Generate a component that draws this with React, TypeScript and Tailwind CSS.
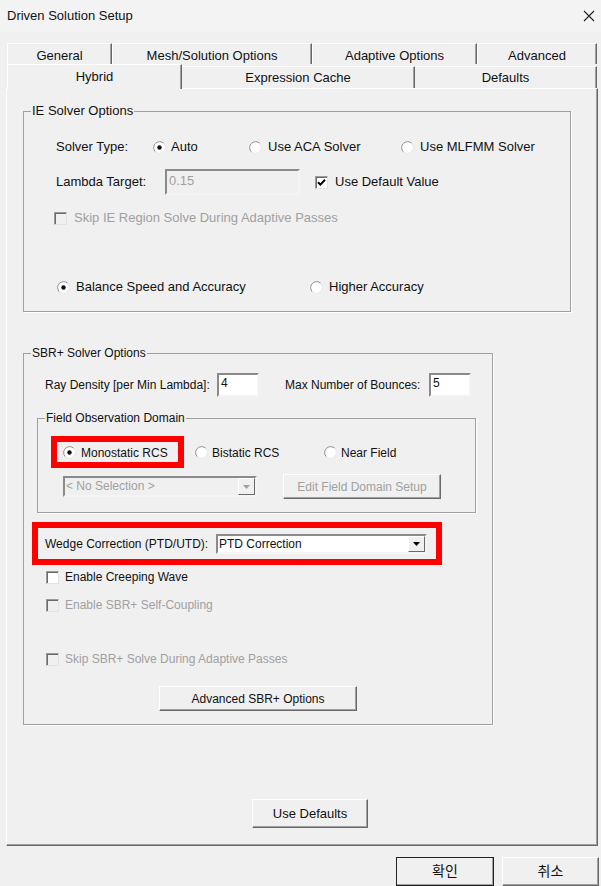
import React from "react";

const sans = "font-['Liberation_Sans','Noto_Sans_CJK_KR',sans-serif]";

function Radio({ on }: { on?: boolean }) {
  return (
    <svg width="13" height="13" viewBox="0 0 13 13" className="shrink-0">
      <circle cx="6.5" cy="6.5" r="6" fill="#fff" />
      <path d="M2.26 10.74 A6 6 0 0 1 10.74 2.26" fill="none" stroke="#8c8c8c" />
      <path d="M10.74 2.26 A6 6 0 0 1 2.26 10.74" fill="none" stroke="#e6e6e6" />
      {on && <circle cx="6.5" cy="6.5" r="2.2" fill="#111" />}
    </svg>
  );
}

function Check({ on, off }: { on?: boolean; off?: boolean }) {
  return (
    <span
      className={`w-[13px] h-[13px] shrink-0 flex items-center justify-center border border-t-[#9a9a9a] border-l-[#9a9a9a] border-r-[#e3e3e3] border-b-[#e3e3e3] shadow-[inset_1px_1px_0_#6a6a6a] ${
        off ? "bg-[#f0f0f0]" : "bg-white"
      }`}
    >
      {on && (
        <svg width="9" height="9" viewBox="0 0 9 9">
          <path d="M1 4.2 L3.4 6.6 L8 1.8" fill="none" stroke="#000" strokeWidth="2" />
        </svg>
      )}
    </span>
  );
}

function Btn({ children, off, className = "" }: { children: React.ReactNode; off?: boolean; className?: string }) {
  return (
    <div
      className={`flex items-center justify-center shrink-0 bg-[#f0f0f0] border border-t-white border-l-white border-r-[#696969] border-b-[#696969] shadow-[inset_-1px_-1px_0_#a0a0a0] ${
        off ? "text-[#a0a0a0]" : "text-[#111]"
      } ${className}`}
    >
      {children}
    </div>
  );
}

function Combo({ text, off, className = "" }: { text: string; off?: boolean; className?: string }) {
  return (
    <div
      className={`flex items-stretch shrink-0 border-2 border-t-[#8a8a8a] border-l-[#8a8a8a] border-r-[#f4f4f4] border-b-[#f4f4f4] ${
        off ? "bg-[#f0f0f0] text-[#a0a0a0]" : "bg-white text-[#111]"
      } ${className}`}
    >
      <span className="grow pl-[1px] leading-[16px]">{text}</span>
      <span className="w-[17px] bg-[#f0f0f0] border border-t-white border-l-white border-r-[#696969] border-b-[#696969] flex items-center justify-center">
        <svg width="7" height="4" viewBox="0 0 7 4">
          <path d="M0 0 H7 L3.5 4 Z" fill={off ? "#a0a0a0" : "#000"} />
        </svg>
      </span>
    </div>
  );
}

function Field({ value, off, className = "" }: { value: string; off?: boolean; className?: string }) {
  return (
    <div
      className={`shrink-0 border-2 border-t-[#8a8a8a] border-l-[#8a8a8a] border-r-[#f4f4f4] border-b-[#f4f4f4] pl-[2px] ${
        off ? "bg-[#f0f0f0] text-[#a0a0a0]" : "bg-white text-[#111]"
      } ${className}`}
    >
      {value}
    </div>
  );
}

export default function App() {
  return (
    <div className={`w-[601px] h-[886px] bg-[#f0f0f0] flex flex-col overflow-hidden text-[#111] ${sans}`}>
      <div className="h-[32px] bg-[#f3f3f3] flex items-center justify-between pl-[7px] pr-[6px]">
        <span className="text-[13px]">Driven Solution Setup</span>
        <svg width="12" height="12" viewBox="0 0 12 12">
          <path d="M1 1 L11 11 M11 1 L1 11" stroke="#222" strokeWidth="1.1" />
        </svg>
      </div>

      <div className="mt-[11px] flex flex-col text-[13px]">
        <div className="flex h-[21px] ml-[7px]">
          {[
            ["General", "w-[105px]"],
            ["Mesh/Solution Options", "w-[200px]"],
            ["Adaptive Options", "w-[165px]"],
            ["Advanced", "w-[120px]"],
          ].map(([t, w]) => (
            <div
              key={t}
              className={`${w} border-t border-l border-white border-r border-r-[#696969] shadow-[inset_-1px_0_0_#a0a0a0] flex items-center justify-center pt-[3px]`}
            >
              {t}
            </div>
          ))}
        </div>
        <div className="flex h-[24px] ml-[7px] items-end">
          <div className="relative z-10 w-[175px] h-[25px] -mb-[1px] bg-[#f0f0f0] border-t border-l border-white border-r border-r-[#696969] shadow-[inset_-1px_0_0_#a0a0a0] flex justify-center pt-[2px]">
            Hybrid
          </div>
          <div className="w-[233px] h-[22px] border-t border-white border-r border-r-[#696969] shadow-[inset_-1px_0_0_#a0a0a0] flex items-center justify-center">
            Expression Cache
          </div>
          <div className="w-[182px] h-[22px] border-t border-white border-r border-r-[#696969] shadow-[inset_-1px_0_0_#a0a0a0] flex items-center justify-center">
            Defaults
          </div>
        </div>

        <div className="ml-[6px] w-[592px] h-[758px] border border-t-white border-l-white border-r-[#696969] border-b-[#696969] shadow-[inset_-1px_-1px_0_#a0a0a0] flex flex-col">
          <fieldset className="ml-[16px] mt-[14px] w-[548px] border border-[#a0a0a0] shadow-[1px_1px_0_#fff]">
            <legend className="ml-[7px] px-[1px] leading-[16px]">IE Solver Options</legend>
            <div className="pl-[32px] pt-[18px] pb-[14px] flex flex-col">
              <div className="flex items-center h-[20px]">
                <span className="w-[97px]">Solver Type:</span>
                <span className="w-[96px] flex items-center gap-[5px]">
                  <Radio on />
                  Auto
                </span>
                <span className="w-[152px] flex items-center gap-[6px]">
                  <Radio />
                  Use ACA Solver
                </span>
                <span className="flex items-center gap-[6px]">
                  <Radio />
                  Use MLFMM Solver
                </span>
              </div>
              <div className="mt-[12px] flex items-center h-[26px]">
                <span className="w-[109px]">Lambda Target:</span>
                <Field value="0.15" off className="w-[135px] h-[26px] leading-[20px]" />
                <span className="ml-[15px] flex items-center gap-[7px]">
                  <Check on />
                  Use Default Value
                </span>
              </div>
              <div className="mt-[13px] -ml-[2px] flex items-center gap-[7px] h-[20px] text-[#a0a0a0]">
                <Check off />
                Skip IE Region Solve During Adaptive Passes
              </div>
              <div className="mt-[49px] ml-[1px] flex items-center h-[20px]">
                <span className="w-[253px] flex items-center gap-[6px]">
                  <Radio on />
                  Balance Speed and Accuracy
                </span>
                <span className="flex items-center gap-[6px]">
                  <Radio />
                  Higher Accuracy
                </span>
              </div>
            </div>
          </fieldset>

          <fieldset className="ml-[16px] mt-[34px] w-[470px] border border-[#a0a0a0] shadow-[1px_1px_0_#fff] text-[12px]">
            <legend className="ml-[7px] px-[1px] leading-[14px]">SBR+ Solver Options</legend>
            <div className="pt-[13px] pb-[13px] flex flex-col">
              <div className="ml-[21px] flex items-center h-[24px]">
                <span className="w-[172px]">Ray Density [per Min Lambda]:</span>
                <Field value="4" className="w-[42px] h-[24px] leading-[16px]" />
                <span className="ml-[26px] w-[144px]">Max Number of Bounces:</span>
                <Field value="5" className="w-[42px] h-[24px] leading-[16px]" />
              </div>

              <fieldset className="ml-[13px] mt-[14px] w-[439px] border border-[#a0a0a0] shadow-[1px_1px_0_#fff]">
                <legend className="ml-[7px] px-[1px] leading-[14px]">Field Observation Domain</legend>
                <div className="pt-[11px] pb-[13px] flex flex-col">
                  <div className="flex items-center">
                    <div className="ml-[13px] w-[133px] h-[32px] border-[6px] border-[#ff0000] flex items-center gap-[5px] pl-[6px] pt-[1px]">
                      <Radio on />
                      Monostatic RCS
                    </div>
                    <span className="ml-[11px] w-[129px] flex items-center gap-[4px] pt-[1px]">
                      <Radio />
                      Bistatic RCS
                    </span>
                    <span className="flex items-center gap-[4px] pt-[1px]">
                      <Radio />
                      Near Field
                    </span>
                  </div>
                  <div className="mt-[6px] flex items-center h-[25px]">
                    <Combo text="< No Selection >" off className="ml-[25px] w-[194px] h-[21px]" />
                    <Btn off className="ml-[26px] w-[158px] h-[25px]">
                      Edit Field Domain Setup
                    </Btn>
                  </div>
                </div>
              </fieldset>

              <div className="ml-[8px] mt-[9px] w-[410px] h-[43px] border-[6px] border-[#ff0000] flex items-center pl-[7px]">
                <span className="w-[171px]">Wedge Correction (PTD/UTD):</span>
                <Combo text="PTD Correction" className="w-[211px] h-[20px]" />
              </div>

              <div className="ml-[22px] mt-[4px] h-[16px] flex items-center gap-[6px]">
                <Check />
                Enable Creeping Wave
              </div>
              <div className="ml-[22px] mt-[12px] h-[16px] flex items-center gap-[6px] text-[#a0a0a0]">
                <Check off />
                Enable SBR+ Self-Coupling
              </div>
              <div className="ml-[22px] mt-[38px] h-[16px] flex items-center gap-[6px] text-[#a0a0a0]">
                <Check off />
                Skip SBR+ Solve During Adaptive Passes
              </div>
              <Btn className="ml-[135px] mt-[19px] w-[198px] h-[25px]">Advanced SBR+ Options</Btn>
            </div>
          </fieldset>

          <Btn className="ml-[245px] mt-[74px] w-[116px] h-[29px] text-[13px]">Use Defaults</Btn>
        </div>

        <div className="mt-[11px] flex justify-end gap-[8px] pr-[2px] text-[14px]">
          <Btn className="w-[98px] h-[29px] outline outline-1 outline-[#222] -outline-offset-1">확인</Btn>
          <Btn className="w-[97px] h-[29px]">취소</Btn>
        </div>
      </div>
    </div>
  );
}
